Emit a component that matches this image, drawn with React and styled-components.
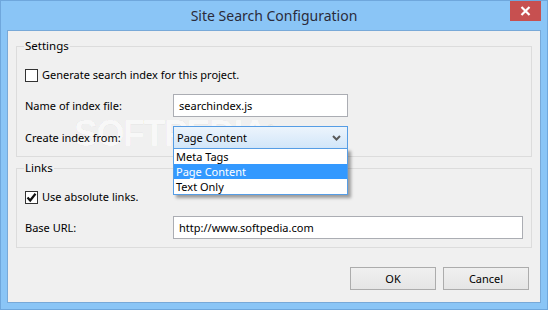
import React from "react";
import styled, { createGlobalStyle } from "styled-components";

const GlobalStyle = createGlobalStyle`
  html, body {
    margin: 0;
    padding: 0;
    background: #8ac5f6;
  }
  * {
    box-sizing: border-box;
  }
`;

export default function App() {
  return (
    <>
      <GlobalStyle />
      <Window>
        <TitleBar>
          <span />
          <Title>Site Search Configuration</Title>
          <CloseButton>
            <svg width="11" height="10" viewBox="0 0 11 10">
              <path d="M1.5 1 L9.5 9 M9.5 1 L1.5 9" stroke="#fff" strokeWidth="2.2" />
            </svg>
          </CloseButton>
        </TitleBar>

        <Client>
          <Watermark>SOFTPEDIA<sup>®</sup></Watermark>

          <Group $top={7} $bottom={7}>
            <Legend>Settings</Legend>
            <CheckRow>
              <CheckBox />
              <span>Generate search index for this project.</span>
            </CheckRow>
            <FieldRow $gap={11}>
              <Label>Name of index file:</Label>
              <TextInput>searchindex.js</TextInput>
            </FieldRow>
            <FieldRow $gap={9}>
              <Label>Create index from:</Label>
              <SelectWrap>
                <SelectBox>
                  <span>Page Content</span>
                  <svg width="9" height="6" viewBox="0 0 9 6">
                    <path d="M1 1 L4.5 4.5 L8 1" stroke="#5a5a5a" strokeWidth="2" fill="none" />
                  </svg>
                </SelectBox>
                <DropList>
                  <Option>Meta Tags</Option>
                  <Option $selected>Page Content</Option>
                  <Option>Text Only</Option>
                </DropList>
              </SelectWrap>
            </FieldRow>
          </Group>

          <Group $top={3} $bottom={8}>
            <Legend>Links</Legend>
            <CheckRow>
              <CheckBox $checked>
                <svg width="11" height="11" viewBox="0 0 11 11">
                  <path d="M1.5 5.5 L4.2 8.5 L9.5 1.8" stroke="#111" strokeWidth="2.2" fill="none" />
                </svg>
              </CheckBox>
              <span>Use absolute links.</span>
            </CheckRow>
            <FieldRow $gap={11}>
              <Label>Base URL:</Label>
              <TextInput $wide>http://www.softpedia.com</TextInput>
            </FieldRow>
          </Group>

          <ButtonBar>
            <Button>OK</Button>
            <Button>Cancel</Button>
          </ButtonBar>
        </Client>
      </Window>
    </>
  );
}

const Window = styled.div`
  width: 548px;
  height: 310px;
  border: 1px solid #6fa7dc;
  background: #8ac5f6;
  display: flex;
  flex-direction: column;
  font-family: "Noto Sans", "Open Sans", sans-serif;
  font-size: 11px;
  color: #000;
`;

const TitleBar = styled.div`
  height: 29px;
  display: grid;
  grid-template-columns: 1fr auto 1fr;
  align-items: start;
`;

const Title = styled.div`
  font-size: 14px;
  line-height: 20px;
  margin-top: 5px;
  color: #2b2b3a;
`;

const CloseButton = styled.div`
  justify-self: end;
  width: 31px;
  height: 20px;
  margin-right: 6px;
  background: #c75050;
  display: flex;
  align-items: center;
  justify-content: center;
`;

const Client = styled.div`
  position: relative;
  flex: 1;
  margin: 0 6px 6px 6px;
  border: 1px solid #78a9d8;
  background: #f0f0f0;
  padding: 0 8px;
  display: flex;
  flex-direction: column;
`;

const Watermark = styled.div`
  position: absolute;
  left: 66px;
  top: 82px;
  font-family: "Liberation Sans", Arial, sans-serif;
  font-weight: bold;
  font-size: 36px;
  letter-spacing: -1.5px;
  color: rgba(255, 255, 255, 0.6);
  -webkit-text-stroke: 0.6px rgba(0, 0, 0, 0.06);
  pointer-events: none;
  z-index: 0;

  sup {
    font-size: 12px;
  }
`;

const Group = styled.fieldset`
  position: relative;
  margin: ${(p) => p.$top}px 0 0 0;
  border: 1px solid #dcdcdc;
  padding: 0 8px ${(p) => p.$bottom}px 8px;
  min-width: 0;
  display: flex;
  flex-direction: column;
`;

const Legend = styled.legend`
  padding: 0 1px;
  margin-left: -1px;
  line-height: 16px;
  height: 16px;
  font-size: 11.5px;
`;

const CheckRow = styled.label`
  display: flex;
  align-items: center;
  gap: 4px;
  height: 16px;
  margin-top: 13px;
  line-height: 16px;
`;

const CheckBox = styled.span`
  width: 13px;
  height: 13px;
  border: 1px solid #333;
  background: #fff;
  display: flex;
  align-items: center;
  justify-content: center;
`;

const FieldRow = styled.div`
  display: grid;
  grid-template-columns: 148px 1fr;
  align-items: center;
  margin-top: ${(p) => p.$gap}px;
`;

const Label = styled.span`
  line-height: 16px;
`;

const TextInput = styled.div`
  width: ${(p) => (p.$wide ? "350px" : "175px")};
  height: 23px;
  border: 1px solid #abadb3;
  background: #fff;
  padding: 0 5px;
  line-height: 21px;
`;

const SelectWrap = styled.div`
  position: relative;
  width: 175px;
  z-index: 2;
`;

const SelectBox = styled.div`
  height: 23px;
  border: 1px solid #569de5;
  background: linear-gradient(#ecf4fc, #d2e6f9);
  padding: 0 6px 0 3px;
  display: flex;
  align-items: center;
  justify-content: space-between;
  line-height: 21px;
`;

const DropList = styled.div`
  position: absolute;
  left: 0;
  right: 0;
  top: calc(100% - 1px);
  border: 1px solid #569de5;
  background: #fff;
  box-shadow: 3px 3px 3px rgba(0, 0, 0, 0.35);
`;

const Option = styled.div`
  height: 15px;
  line-height: 15px;
  padding-left: 2px;
  background: ${(p) => (p.$selected ? "#3399ff" : "#fff")};
  color: ${(p) => (p.$selected ? "#fff" : "#000")};
`;

const ButtonBar = styled.div`
  display: flex;
  justify-content: flex-end;
  gap: 7px;
  margin: 19px 3px 0 0;
`;

const Button = styled.div`
  width: 86px;
  height: 23px;
  border: 1px solid #acacac;
  background: linear-gradient(#f0f0f0, #e5e5e5);
  display: flex;
  align-items: center;
  justify-content: center;
`;
